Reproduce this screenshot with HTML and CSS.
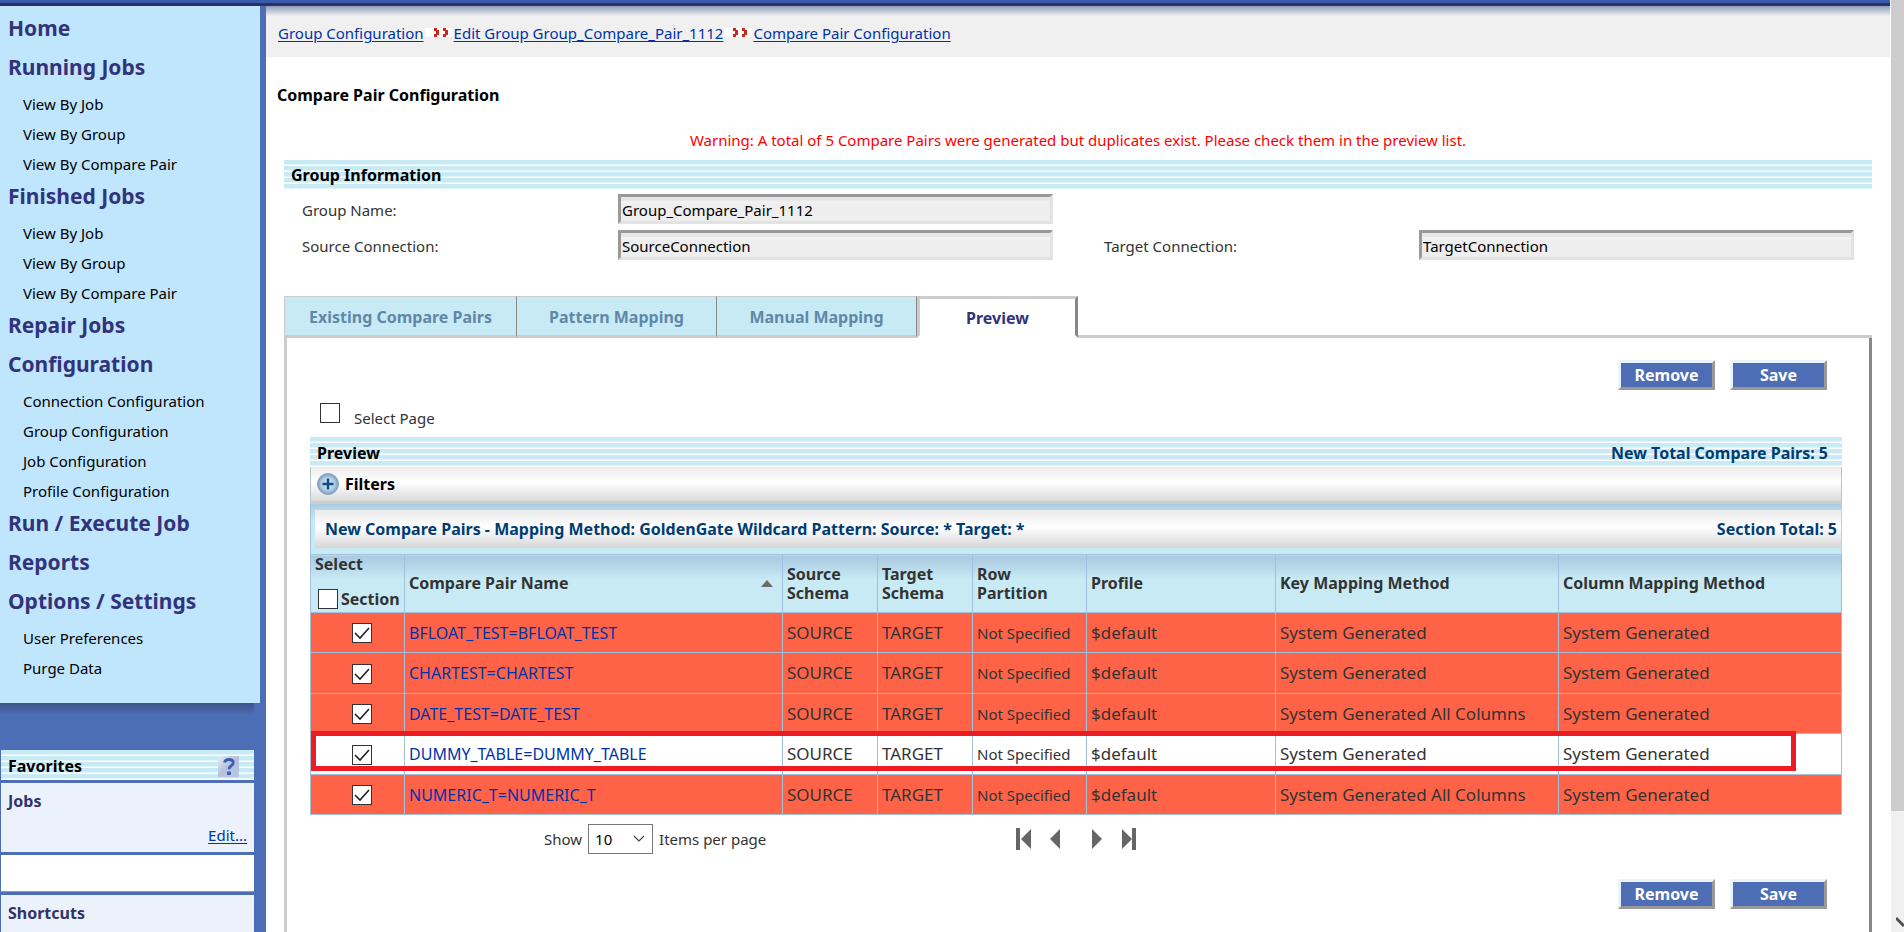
FILE: index.html
```html
<!DOCTYPE html>
<html lang="en">
<head>
<meta charset="utf-8">
<title>Compare Pair Configuration</title>
<link rel="stylesheet" href="styles.css">
</head>
<body>
<div class="window">
  <div class="page">
    <div class="topbar"></div>
    <div class="columns">
      <aside class="sidebar">
        <nav class="nav">
          <a class="nav-head" href="#">Home</a>
          <a class="nav-head" href="#">Running Jobs</a>
          <a class="nav-item" href="#">View By Job</a>
          <a class="nav-item" href="#">View By Group</a>
          <a class="nav-item" href="#">View By Compare Pair</a>
          <a class="nav-head" href="#">Finished Jobs</a>
          <a class="nav-item" href="#">View By Job</a>
          <a class="nav-item" href="#">View By Group</a>
          <a class="nav-item" href="#">View By Compare Pair</a>
          <a class="nav-head" href="#">Repair Jobs</a>
          <a class="nav-head" href="#">Configuration</a>
          <a class="nav-item" href="#">Connection Configuration</a>
          <a class="nav-item" href="#">Group Configuration</a>
          <a class="nav-item" href="#">Job Configuration</a>
          <a class="nav-item" href="#">Profile Configuration</a>
          <a class="nav-head" href="#">Run / Execute Job</a>
          <a class="nav-head" href="#">Reports</a>
          <a class="nav-head" href="#">Options / Settings</a>
          <a class="nav-item" href="#">User Preferences</a>
          <a class="nav-item" href="#">Purge Data</a>
        </nav>
        <div class="nav-shadow"></div>
        <section class="favorites">
          <div class="fav-title striped">
            <span>Favorites</span>
            <svg class="help" viewBox="0 0 21 21" aria-label="Help">
              <defs><linearGradient id="hg" x1="0" y1="0" x2="1" y2="1"><stop offset="0" stop-color="#e4edf6"/><stop offset="0.5" stop-color="#b4c0de"/><stop offset="1" stop-color="#b8c6e4"/></linearGradient></defs>
              <rect width="21" height="21" fill="url(#hg)"/>
              <path d="M6.500 6.500C7 4.300 8.700 3.500 11 3.500C13.800 3.500 15.300 4.900 15.300 6.800C15.300 9.700 11 9.600 11 13.300" fill="none" stroke="#3f5fae" stroke-width="2.800"/>
              <rect x="9" y="15.500" width="4" height="3.500" rx="1" fill="#3f5fae"/>
            </svg>
          </div>
          <div class="fav-jobs">
            <strong>Jobs</strong>
            <a class="link" href="#">Edit...</a>
          </div>
          <div class="fav-empty"></div>
          <div class="fav-short"><strong>Shortcuts</strong></div>
        </section>
      </aside>

      <main class="main">
        <nav class="crumbs">
          <a class="link" href="#">Group Configuration</a>
          <svg class="sep" viewBox="0 0 28 9"><rect width="28" height="9" fill="#fff"/><path d="M9 0h3v2h2v5h-2v2H9V6h2V3H9zM18 0h3v2h2v5h-2v2h-3V6h2V3h-2z" fill="#c8281e"/></svg>
          <a class="link" href="#">Edit Group Group_Compare_Pair_1112</a>
          <svg class="sep" viewBox="0 0 28 9"><rect width="28" height="9" fill="#fff"/><path d="M9 0h3v2h2v5h-2v2H9V6h2V3H9zM18 0h3v2h2v5h-2v2h-3V6h2V3h-2z" fill="#c8281e"/></svg>
          <a class="link" href="#">Compare Pair Configuration</a>
        </nav>

        <h1 class="title">Compare Pair Configuration</h1>
        <p class="warning">Warning: A total of 5 Compare Pairs were generated but duplicates exist. Please check them in the preview list.</p>

        <div class="content">
          <h2 class="group-title striped">Group Information</h2>
          <div class="form">
            <label for="gname">Group Name:</label>
            <input id="gname" class="field" type="text" value="Group_Compare_Pair_1112" readonly>
            <span></span><span></span>
            <label for="src">Source Connection:</label>
            <input id="src" class="field" type="text" value="SourceConnection" readonly>
            <label for="tgt">Target Connection:</label>
            <input id="tgt" class="field" type="text" value="TargetConnection" readonly>
          </div>

          <div class="tabs">
            <button class="tab tab-wide" type="button">Existing Compare Pairs</button>
            <button class="tab" type="button">Pattern Mapping</button>
            <button class="tab" type="button">Manual Mapping</button>
            <button class="tab tab-active" type="button">Preview</button>
            <span class="tab-rest"></span>
          </div>

          <section class="panel">
            <div class="actions">
              <button class="btn" type="button">Remove</button>
              <button class="btn" type="button">Save</button>
            </div>
            <div class="select-page">
              <input id="selpage" class="check" type="checkbox">
              <label for="selpage">Select Page</label>
            </div>

            <div class="preview-title striped">
              <span>Preview</span>
              <span class="navy">New Total Compare Pairs: 5</span>
            </div>
            <div class="filters">
              <svg class="plus" viewBox="0 0 22 22">
                <defs><radialGradient id="pg"><stop offset="0" stop-color="#d4e6f2"/><stop offset="0.65" stop-color="#b4cce0"/><stop offset="1" stop-color="#6f95b8"/></radialGradient></defs>
                <circle cx="11" cy="11" r="10.500" fill="url(#pg)" stroke="#8ba9c4"/>
                <path d="M11 5.500v11M5.500 11h11" stroke="#0d4f88" stroke-width="2.400"/>
              </svg>
              <span>Filters</span>
            </div>
            <div class="section-wrap">
              <div class="section-bar navy">
                <span>New Compare Pairs - Mapping Method: GoldenGate Wildcard Pattern: Source: * Target: *</span>
                <span>Section Total: 5</span>
              </div>
            </div>

            <table class="pairs">
              <colgroup>
                <col class="c-select"><col class="c-name"><col class="c-schema"><col class="c-schema"><col class="c-row"><col class="c-profile"><col class="c-method"><col class="c-method">
              </colgroup>
              <thead>
                <tr>
                  <th class="th-select">
                    <span class="select-label">Select</span>
                    <span class="section-check"><input id="selsec" class="check" type="checkbox"><label for="selsec">Section</label></span>
                  </th>
                  <th><span class="sort">Compare Pair Name <svg viewBox="0 0 12 7"><path d="M6 0l6 7H0z" fill="#6b6b6b"/></svg></span></th>
                  <th>Source Schema</th>
                  <th>Target Schema</th>
                  <th>Row Partition</th>
                  <th>Profile</th>
                  <th>Key Mapping Method</th>
                  <th>Column Mapping Method</th>
                </tr>
              </thead>
              <tbody>
                <tr>
                  <td class="pick"><input class="check" type="checkbox" checked aria-label="Select BFLOAT_TEST"></td>
                  <td class="name"><a href="#">BFLOAT_TEST=BFLOAT_TEST</a></td><td>SOURCE</td><td>TARGET</td><td class="small">Not Specified</td><td>$default</td><td>System Generated</td><td>System Generated</td>
                </tr>
                <tr>
                  <td class="pick"><input class="check" type="checkbox" checked aria-label="Select CHARTEST"></td>
                  <td class="name"><a href="#">CHARTEST=CHARTEST</a></td><td>SOURCE</td><td>TARGET</td><td class="small">Not Specified</td><td>$default</td><td>System Generated</td><td>System Generated</td>
                </tr>
                <tr>
                  <td class="pick"><input class="check" type="checkbox" checked aria-label="Select DATE_TEST"></td>
                  <td class="name"><a href="#">DATE_TEST=DATE_TEST</a></td><td>SOURCE</td><td>TARGET</td><td class="small">Not Specified</td><td>$default</td><td>System Generated All Columns</td><td>System Generated</td>
                </tr>
                <tr class="fresh">
                  <td class="pick"><input class="check" type="checkbox" checked aria-label="Select DUMMY_TABLE"><span class="marker"></span></td>
                  <td class="name"><a href="#">DUMMY_TABLE=DUMMY_TABLE</a></td><td>SOURCE</td><td>TARGET</td><td class="small">Not Specified</td><td>$default</td><td>System Generated</td><td>System Generated</td>
                </tr>
                <tr>
                  <td class="pick"><input class="check" type="checkbox" checked aria-label="Select NUMERIC_T"></td>
                  <td class="name"><a href="#">NUMERIC_T=NUMERIC_T</a></td><td>SOURCE</td><td>TARGET</td><td class="small">Not Specified</td><td>$default</td><td>System Generated All Columns</td><td>System Generated</td>
                </tr>
              </tbody>
            </table>

            <div class="pager">
              <div class="per-page">
                <label for="per">Show</label>
                <select id="per" class="per"><option>10</option><option>25</option></select>
                <span>Items per page</span>
              </div>
              <div class="steps">
                <button type="button" aria-label="First page"><svg viewBox="0 0 16 22"><path d="M0 0h4v22H0zM15 1v20L5 11z"/></svg></button>
                <button type="button" aria-label="Previous page"><svg viewBox="0 0 16 22"><path d="M12 1v20L2 11z"/></svg></button>
                <button class="gap" type="button" aria-label="Next page"><svg viewBox="0 0 16 22"><path d="M4 1v20L14 11z"/></svg></button>
                <button type="button" aria-label="Last page"><svg viewBox="0 0 16 22"><path d="M12 0h4v22h-4zM2 1v20L12 11z"/></svg></button>
              </div>
            </div>

            <div class="actions">
              <button class="btn" type="button">Remove</button>
              <button class="btn" type="button">Save</button>
            </div>
          </section>
        </div>
      </main>
    </div>
  </div>
  <div class="scroll">
    <div class="thumb"></div>
    <svg class="down" viewBox="0 0 8 12"><path d="M0 2l8 8" stroke="#505050" stroke-width="3" fill="none"/></svg>
  </div>
</div>
</body>
</html>
```
FILE: styles.css
```css
* { box-sizing: border-box; }
body {
  margin: 0;
  font: 15px/20px "Noto Sans", sans-serif;
  color: #333;
  background: #fff;
}
button, input, select { font: inherit; margin: 0; }
h1, h2, p { margin: 0; line-height: 20px; }
h1, h2, strong { font-size: 16px; }
p { font-size: 15px; }

.window { display: flex; height: 100vh; overflow: hidden; }
.page { flex: 1; min-width: 0; display: flex; flex-direction: column; }
.topbar { height: 6px; flex: none; background: #3a5bac; border-bottom: 3px solid #2f2f68; }
.columns { flex: 1; display: flex; min-height: 0; }

.striped {
  background: repeating-linear-gradient(#c8eaf4 0 4px, #e4f5fa 4px 5px, #fff 5px 6px);
}
.link { color: #0033aa; text-decoration: underline; text-underline-offset: 2px; }
.navy { color: #003c74; }

.sidebar { flex: 0 0 266px; background: #4d6db5; }
.nav {
  display: flex;
  flex-direction: column;
  margin-right: 6px;
  padding: 3px 8px 22px;
  background: #c0e6fe;
}
.nav a { text-decoration: none; }
.nav-head { font-size: 21px; font-weight: bold; line-height: 39px; color: #33337a; }
.nav-item { padding: 4px 0 0 15px; line-height: 26px; color: #000; }
.nav-shadow {
  height: 12px;
  margin-right: 12px;
  background: linear-gradient(#3d5488, #4d6db5);
}
.favorites { display: flex; flex-direction: column; gap: 3px; margin: 35px 12px 0 1px; }
.fav-title {
  display: flex;
  justify-content: space-between;
  align-items: center;
  height: 30px;
  padding: 2px 15px 0 7px;
  font-size: 16px;
  font-weight: bold;
  color: #000;
}
.help { width: 21px; height: 21px; }
.fav-jobs, .fav-short { background: #ebf2fc; padding: 8px 7px 7px; color: #333366; }
.fav-jobs { display: flex; flex-direction: column; height: 69px; justify-content: space-between; }
.fav-jobs .link { align-self: flex-end; }
.fav-empty { height: 37px; background: #fff; border-bottom: 1px solid #999; }
.fav-short { height: 100px; }

.main { flex: 1; min-width: 0; }
.crumbs {
  display: flex;
  align-items: center;
  height: 51px;
  padding: 2px 12px 0;
  background: linear-gradient(#8c9ebc, #f0f0f0 10px);
}
.sep { width: 28px; height: 9px; margin: 0 1px; }
.title { margin: 28px 0 0 11px; color: #000; }
.warning { margin-top: 25px; text-align: center; color: #f00; }
.content { margin: 10px 18px 0; }
.group-title { height: 29px; padding: 0 7px; line-height: 30px; color: #000; }
.form {
  display: grid;
  grid-template-columns: 334fr 435fr 51fr 315fr 435fr 18fr;
  row-gap: 6px;
  align-items: center;
  padding-top: 5px;
}
.form > :nth-child(1), .form > :nth-child(5) { grid-column: 1; padding-left: 18px; }
.form > :nth-child(2), .form > :nth-child(6) { grid-column: 2; }
.form > :nth-child(3), .form > :nth-child(7) { grid-column: 4; }
.form > :nth-child(4), .form > :nth-child(8) { grid-column: 5; }
.form label { padding-top: 2px; }
.field {
  min-width: 0;
  width: 100%;
  height: 30px;
  padding: 1px 1px 0;
  border: 3px solid;
  border-color: #999 #e2e2e2 #e2e2e2 #999;
  background: linear-gradient(#e6e6e6 0 3px, #f4f4f4 5px, #eee 7px);
  color: #000;
}

.tabs { display: flex; margin-top: 36px; height: 42px; }
.tab {
  width: 200px;
  padding: 2px 0 0;
  border: 0;
  border-top: 1px solid #ccc;
  border-right: 1px solid #888;
  border-bottom: 3px solid #ccc;
  background: #c8eaf4;
  color: #5f88aa;
  font-size: 16px;
  font-weight: bold;
}
.tab-wide { width: 233px; border-left: 1px solid #ccc; }
.tab-active {
  width: 161px;
  border: 3px solid #ccc;
  border-right-color: #888;
  border-bottom-color: #fff;
  background: #fff;
  color: #33337a;
}
.tab-rest { flex: 1; border-bottom: 3px solid #ccc; }

.panel {
  border-left: 3px solid #ccc;
  border-right: 3px solid #888;
  padding: 22px 27px 100px 23px;
}
.actions { display: flex; justify-content: flex-end; gap: 15px; padding-right: 15px; }
.btn {
  width: 97px;
  height: 30px;
  padding: 0;
  border: 3px solid;
  border-color: #ebf2fc #999 #999 #ebf2fc;
  background: #4d6db5;
  color: #fff;
  font-size: 16px;
  font-weight: bold;
}
.check {
  appearance: none;
  flex: none;
  width: 20px;
  height: 20px;
  border: 1px solid #333;
  background: #fff;
}
.check:checked {
  background: #fff url("data:image/svg+xml,%3Csvg xmlns='http://www.w3.org/2000/svg' viewBox='0 0 18 18'%3E%3Cpath d='M2 9l5 5L16 4' fill='none' stroke='%23222' stroke-width='1.600'/%3E%3C/svg%3E") center / 18px 18px no-repeat;
}
.select-page { display: flex; gap: 14px; padding: 13px 10px 0; height: 47px; }
.select-page label { padding-top: 5px; }

.preview-title {
  display: flex;
  justify-content: space-between;
  height: 30px;
  padding: 0 14px 0 7px;
  line-height: 32px;
  font-size: 16px;
  font-weight: bold;
  color: #000;
}
.preview-title .navy { color: #003c74; }
.filters {
  display: flex;
  align-items: center;
  gap: 6px;
  height: 37px;
  padding-left: 6px;
  border: 1px solid #b0c8c8;
  border-width: 0 1px;
  border-bottom: 3px solid #ccc;
  background: linear-gradient(#ececec, #fff 45%, #dadadc);
  font-size: 16px;
  font-weight: bold;
  color: #000;
}
.plus { width: 22px; height: 22px; }
.section-wrap {
  padding: 6px 0 6px 4px;
  border-left: 1px solid #a0c0dc;
  border-right: 1px solid #ccc;
  background: linear-gradient(#a8c8e0, #b8d8ec 6px, #c8eaf4 18px);
}
.section-bar {
  display: flex;
  justify-content: space-between;
  padding: 0 4px 0 10px;
  line-height: 38px;
  font-size: 16px;
  font-weight: bold;
  background: linear-gradient(#eaeaea, #fff 45%, #d6d6d6);
}

.pairs { width: 100%; table-layout: fixed; border-collapse: collapse; }
.c-select { width: 94px; }
.c-name { width: 378px; }
.c-schema { width: 95px; }
.c-row { width: 114px; }
.c-profile { width: 189px; }
.pairs th, .pairs td { border: 1px solid #a0c0dc; padding: 0 4px; text-align: left; }
.pairs th {
  height: 58px;
  font-size: 16px;
  line-height: 19px;
  background: linear-gradient(#a8c8e0, #c8eaf4 24px);
}
.pairs .th-select { vertical-align: top; padding-right: 0; }
.select-label { display: block; }
.section-check { display: flex; align-items: flex-end; gap: 3px; padding: 15px 0 2px 3px; }
.sort { display: flex; align-items: center; justify-content: space-between; padding-right: 5px; }
.sort svg { width: 12px; height: 7px; }
.pairs td { height: 40px; font-size: 17px; background: #ff6347; }
.pairs tbody tr:nth-child(even) td { height: 41px; }
.pairs td.name { font-size: 16px; }
.pairs td.small { font-size: 15px; }
.name a { color: #0033aa; text-decoration: none; }
.pairs td.pick { padding-left: 12px; text-align: center; }
.pick .check { vertical-align: middle; }
.fresh { position: relative; }
.pairs .fresh td { background: #fff; }
.marker {
  position: absolute;
  left: 0;
  right: 46px;
  top: -3px;
  height: 40px;
  border: 5px solid #ed1c24;
}

.pager { display: flex; align-items: center; margin: 9px 0 25px; padding-left: 234px; }
.per-page { display: flex; align-items: center; gap: 6px; width: 464px; }
.per {
  appearance: none;
  width: 65px;
  height: 30px;
  padding: 0 6px;
  border: 1px solid #777;
  border-radius: 0;
  color: #000;
  background: #fff url("data:image/svg+xml,%3Csvg xmlns='http://www.w3.org/2000/svg' viewBox='0 0 12 8'%3E%3Cpath d='M1 1l5 5 5-5' fill='none' stroke='%23444' stroke-width='1.200'/%3E%3C/svg%3E") right 7px center / 12px 8px no-repeat;
}
.steps { display: flex; gap: 16px; padding-left: 8px; }
.steps button { padding: 0; border: 0; background: none; width: 16px; height: 22px; }
.steps .gap { margin-left: 8px; }
.steps svg { display: block; width: 16px; height: 22px; fill: #666; }

.scroll {
  flex: 0 0 14px;
  display: flex;
  flex-direction: column;
  justify-content: space-between;
  border-left: 1px solid #fff;
  background: #f0f0f0;
}
.thumb { height: 87%; background: #ccc; }
.down { align-self: flex-end; width: 8px; height: 12px; margin-bottom: 4px; }
```
